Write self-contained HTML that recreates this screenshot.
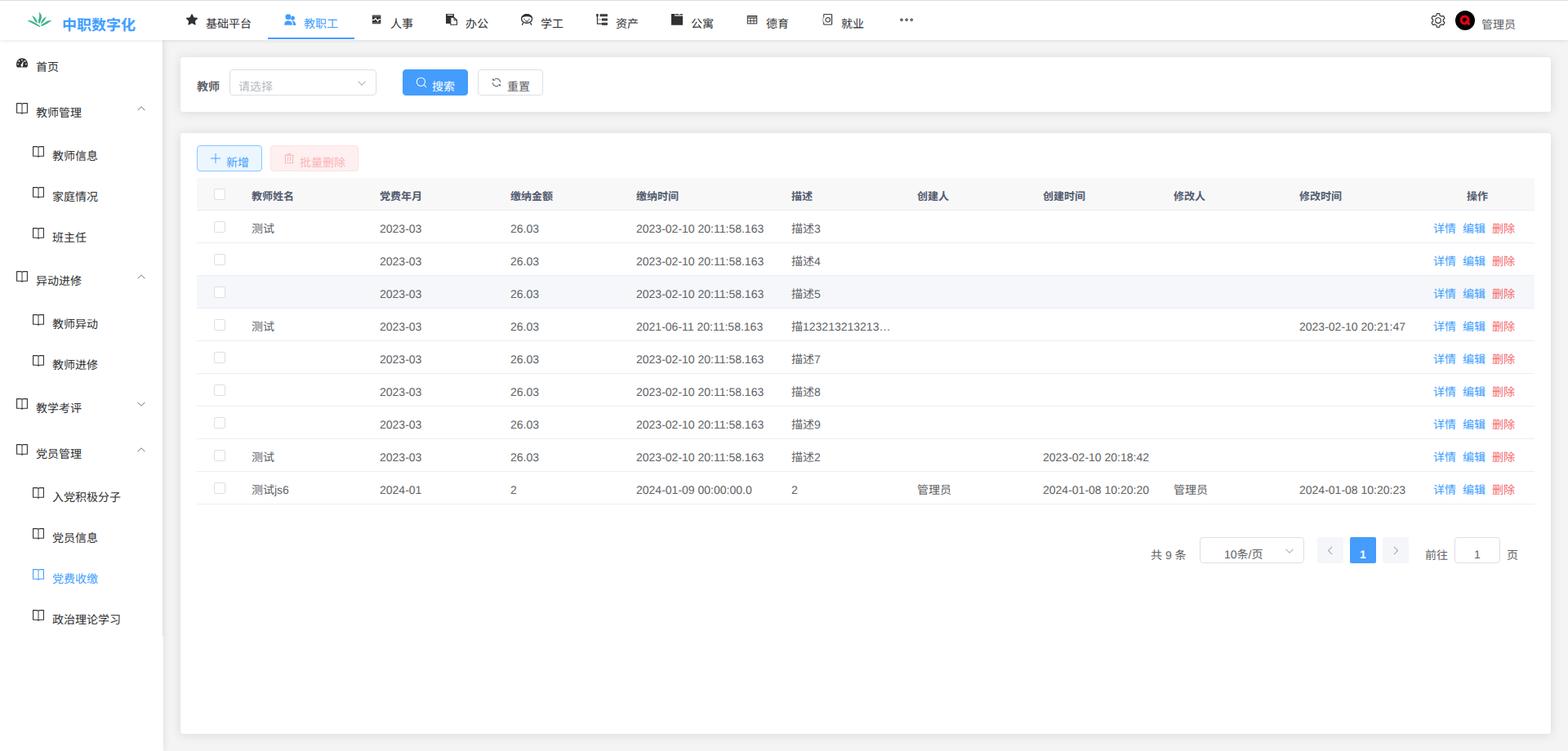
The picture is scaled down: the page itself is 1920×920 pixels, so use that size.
<!DOCTYPE html>
<html lang="zh-CN">
<head>
<meta charset="utf-8">
<title>党费收缴</title>
<style>
*{box-sizing:border-box;margin:0;padding:0}
html,body{width:1920px;height:920px;overflow:hidden}
body{font-family:"Liberation Sans","Noto Sans CJK SC",sans-serif;font-size:14px;color:#606266;background:#f4f4f5;position:relative;text-rendering:geometricPrecision}
svg{display:block}
.abs{position:absolute}

/* ---------- header ---------- */
#topline{position:absolute;left:0;top:0;width:1920px;height:1px;background:#dcdedc;z-index:30}
#header{position:absolute;left:0;top:0;width:1920px;height:49px;background:#fff;box-shadow:0 1px 4px rgba(0,21,41,.10);z-index:20}
#logo-ic{position:absolute;left:33px;top:14px;width:31px;height:20px}
#logo-tx{position:absolute;left:76px;top:12px;height:26px;line-height:26px;font-size:18px;font-weight:bold;color:#409eff;white-space:nowrap}
.nav{position:absolute;top:0;height:48px;line-height:48px;font-size:14px;color:#303133;white-space:nowrap}
.nav .ic{position:absolute;left:20px;top:17px;width:14px;height:14px}
.nav .tx{position:absolute;left:44px;top:0}
.nav.act{color:#409eff}
.nav.act:after{content:"";position:absolute;left:0;right:0;top:46px;height:2px;background:#409eff}
#gear{position:absolute;left:1752px;top:16px;width:18px;height:18px}
#avatar{position:absolute;left:1782px;top:13px;width:24px;height:24px;border-radius:50%;background:#000;overflow:hidden}
#uname{position:absolute;left:1814px;top:13px;height:24px;line-height:24px;font-size:14px;color:#606266;white-space:nowrap}

/* ---------- sidebar ---------- */
#side{position:absolute;left:0;top:49px;width:200px;height:871px;background:#fff;z-index:10;box-shadow:1px 0 8px rgba(0,10,20,.085)}
#side .bd{position:absolute;left:199px;top:0;width:1px;height:730px;background:#dfe1e9}
.mi{position:absolute;left:0;width:199px;font-size:14px;color:#303133;white-space:nowrap}
.mi.l1{height:56px;line-height:56px}
.mi.l2{height:50px;line-height:50px}
.mi .ic{position:absolute;width:14px;height:14px}
.mi.l1 .ic{left:20px;top:21px}
.mi.l2 .ic{left:40px;top:18px}
.mi.l1 .tx{position:absolute;left:44px;top:0}
.mi.l2 .tx{position:absolute;left:64px;top:0}
.mi .ar{position:absolute;left:168px;top:25.2px;width:10px;height:6px}
.mi.on{color:#409eff}

/* ---------- cards ---------- */
.card{position:absolute;left:221px;width:1678px;background:#fff;border-radius:3px;box-shadow:0 0 0 1px rgba(228,231,240,.4),0 1px 14px 0 rgba(0,0,0,.11)}
#c1{top:70px;height:67px}
#c2{top:163px;height:736px}

/* ---------- search form ---------- */
#lbl{position:absolute;left:20px;top:15px;height:32px;line-height:32px;font-size:14px;font-weight:bold;color:#606266}
.sel{position:absolute;height:32px;border:1px solid #dcdfe6;border-radius:4px;background:#fff;font-size:14px;line-height:30px;white-space:nowrap}
#tsel{left:60px;top:15px;width:180px;padding-left:10px;color:#b6bac2}
.sel .dn{position:absolute;width:10px;height:6px;top:12.5px}
.btn{position:absolute;height:32px;border-radius:4px;font-size:14px;line-height:30px;border:1px solid #dcdfe6;background:#fff;color:#606266;white-space:nowrap}
.btn .bi{position:absolute;top:8px;width:14px;height:14px}
.btn .bt{position:absolute;top:0}
#bsearch{left:272px;top:15px;width:80px;background:#449cfc;border-color:#449cfc;color:#fff}
#breset{left:364px;top:15px;width:80px}
#badd{left:20px;top:15px;width:80px;background:#ebf6ff;border-color:#8cc5ff;color:#409eff}
#bdel{left:110px;top:15px;width:108px;background:#fef0f0;border-color:#fde2e2;color:#fab6b6}

/* ---------- table ---------- */
#tb{position:absolute;left:20px;top:55px;width:1638px;border-collapse:separate;border-spacing:0;table-layout:fixed;font-size:14px;color:#606266}
#tb th,#tb td{height:40px;padding:0 10px;text-align:left;vertical-align:middle;border-bottom:1px solid #ebeef5;white-space:nowrap;overflow:hidden;text-overflow:ellipsis;line-height:23px}
#tb th{background:#f8f8f9;color:#515a6e;font-size:13px;font-weight:bold}
#tb tr.hv td{background:#f5f7fa}
#tb .c{text-align:center}
.cb{display:inline-block;width:14px;height:14px;border:1px solid #dcdfe6;border-radius:2px;background:#fff;vertical-align:middle;position:relative;top:-1px;left:-1px}
#tb td .cb{top:0}
#tb td.op{padding:0 10px;text-align:center;font-size:14px}
#tb td.op a{color:#409eff;margin-right:8px;text-decoration:none}
#tb td.op a.d{color:#f56c6c}

/* ---------- pagination ---------- */
#pg{position:absolute;left:0;top:495px;width:1678px;height:32px;font-size:14px;color:#606266;line-height:32px}
#pg .t{position:absolute;top:1px;white-space:nowrap}
#pg .pb{position:absolute;top:0;width:32px;height:32px;border-radius:2px;background:#f5f6fa}
#pg .pb svg{position:absolute;left:12px;top:10.5px;width:8px;height:11px}
#pg .pn{position:absolute;top:0;width:32px;height:32px;border-radius:2px;background:#449cfc;color:#fff;font-weight:bold;text-align:center;font-size:14px}

/* ---------- text spans (real text) ---------- */
.z{display:inline-block;position:relative;overflow:visible;white-space:pre;height:1.4em;line-height:1.4em;vertical-align:-.35em;text-align:left}
</style>
</head>
<body>
<div id="topline"></div>

<!-- HEADER -->
<div id="header">
  <svg id="logo-ic" viewBox="0 0 31 20"><g fill="#3fb38b"><path d="M14.4 1.1C16.6 1.8 18.2 4.4 18 6.9C17.8 10 16.2 12 15.7 14.7L14.4 14.6C13.5 12 14.2 9.6 15 7C15.5 5 15.3 3 14.4 1.1Z"></path><path d="M6.2 5C9.6 6.6 12.4 10 13 14.4C10.4 13.6 8.4 10 6.2 5Z"></path><path d="M23.9 6.2C20.4 8 17.7 11 16.7 15.2C19.9 14.1 21.9 10.5 23.9 6.2Z"></path><path d="M.8 11.4C2.5 10.5 4.5 10.9 6 11.7C10 13.7 14 15.9 16.3 18.3C16 19 15.3 19.1 14.7 18.7C11 16.6 5 13.6 .8 11.4Z"></path><path d="M30.1 11.3C27.5 10.7 25 11.7 22.9 12.9C20 14.6 18 15.9 16.8 17.1C16.9 17.9 17.6 18.1 18.3 17.9C22 16.9 26.5 14 30.1 11.3Z"></path></g></svg>
  <div id="logo-tx"><span class="z" style="width: 90px;">中职数字化</span></div>

  <div class="nav" style="left:208px;width:120px">
    <svg class="ic" viewBox="0 0 14 14"><path d="M7.00 0.80 L8.94 4.83 L13.37 5.43 L10.14 8.52 L10.94 12.92 L7.00 10.80 L3.06 12.92 L3.86 8.52 L0.63 5.43 L5.06 4.83Z" fill="#303133" stroke="#303133" stroke-width="1.3" stroke-linejoin="round"></path></svg>
    <span class="tx"><span class="z" style="width: 56px;">基础平台</span></span>
  </div>
  <div class="nav act" style="left:328px;width:106px">
    <svg class="ic" viewBox="0 0 14 14"><g fill="#409eff"><circle cx="10.3" cy="5.1" r="2.6"></circle><path d="M9.2 8.6C12.2 8.2 14.2 10.2 14.2 14H11.2C11.2 11.6 10.5 9.9 9.2 8.6Z"></path><circle cx="4.9" cy="3.7" r="3.6" stroke="#fff" stroke-width=".8"></circle><path d="M-.2 14C-.2 10.2 1.9 8.1 4.9 8.1S10.4 10.2 10.4 14Z" stroke="#fff" stroke-width=".6"></path><circle cx="4.9" cy="3.7" r="3.3"></circle></g></svg>
    <span class="tx"><span class="z" style="width: 42px;">教职工</span></span>
  </div>
  <div class="nav" style="left:434px;width:92px">
    <svg class="ic" viewBox="0 0 14 14"><rect x="1.8" y="1.6" width="10.5" height="10.6" rx=".7" fill="#303133"></rect><path d="M2 7.3H4.2L6 5.4L8.5 8.9L10.1 6.7H12.1" fill="none" stroke="#fff" stroke-width="1.3"></path><path d="M2.3 2.9H11.8M2.3 10.9H11.8" stroke="#fff" stroke-opacity=".5" stroke-width=".8"></path></svg>
    <span class="tx"><span class="z" style="width: 28px;">人事</span></span>
  </div>
  <div class="nav" style="left:526px;width:92px">
    <svg class="ic" viewBox="0 0 14 14"><rect x="0" y="0" width="9.9" height="11.9" fill="#303133"></rect><path d="M1.8 1.5H8.4" stroke="#fff" stroke-width="1.2"></path><path d="M5.8 4.3H10L13.5 7.8V13.3H5.8Z" fill="#fff" stroke="#303133" stroke-width="1.1"></path><path d="M10 4.5V7.8H13.3" fill="none" stroke="#303133" stroke-width="1"></path></svg>
    <span class="tx"><span class="z" style="width: 28px;">办公</span></span>
  </div>
  <div class="nav" style="left:618px;width:92px">
    <svg class="ic" viewBox="0 0 14 14"><ellipse cx="7.1" cy="5.95" rx="6.5" ry="5.3" fill="#fff" stroke="#303133" stroke-width="1.3"></ellipse><path d="M.9 5C1.4 1.9 3.9 0 7.1 0S12.8 1.9 13.3 5C11 2.7 3.2 2.7 .9 5Z" fill="#303133"></path><circle cx="4.2" cy="6.5" r=".75" fill="#303133"></circle><circle cx="9.9" cy="6.5" r=".75" fill="#303133"></circle><path d="M4.8 7.9C5.8 9.7 8.4 9.7 9.4 7.9" fill="#303133" fill-opacity=".35" stroke="#303133" stroke-width="1"></path><path d="M2.6 10.7L1.4 13.8M11.6 10.7L12.7 13.8" stroke="#303133" stroke-width="1.3"></path></svg>
    <span class="tx"><span class="z" style="width: 28px;">学工</span></span>
  </div>
  <div class="nav" style="left:710px;width:92px">
    <svg class="ic" viewBox="0 0 14 14"><g fill="#303133"><rect x=".2" y=".1" width="2.4" height="3.1" rx=".5"></rect><rect x="4.6" y=".2" width="9.3" height="3"></rect><rect x="7" y="5.5" width="6.9" height="3"></rect><rect x="7" y="10.7" width="6.9" height="3.1"></rect></g><path d="M1.4 3V12.1H7" fill="none" stroke="#303133" stroke-width="1.1"></path><path d="M2 7H7" stroke="#303133" stroke-opacity=".4" stroke-width="1.3"></path><path d="M5.2 1.4H13.6M7.5 6.7H13.6M7.5 11.9H13.6" stroke="#fff" stroke-opacity=".3" stroke-width=".5"></path></svg>
    <span class="tx"><span class="z" style="width: 28px;">资产</span></span>
  </div>
  <div class="nav" style="left:802px;width:92px">
    <svg class="ic" viewBox="0 0 14 14"><path d="M0 .1H4.2V2.8H14V13.8H0Z" fill="#303133"></path><rect x="4.3" y="1.1" width="9.7" height="1.7" fill="#a6a6a6"></rect><path d="M4.5 .5H9.2M10.6 .5H14" stroke="#303133" stroke-width=".9"></path></svg>
    <span class="tx"><span class="z" style="width: 28px;">公寓</span></span>
  </div>
  <div class="nav" style="left:894px;width:92px">
    <svg class="ic" viewBox="0 0 14 14"><rect x="1.3" y="2.5" width="11.4" height="9.4" fill="#fff" stroke="#303133" stroke-width="1"></rect><rect x="1.8" y="3" width="10.4" height="1.7" fill="#999"></rect><path d="M1.3 5.2H12.7M1.3 8.6H12.7M5 5.2V11.9M9 5.2V11.9" stroke="#303133" stroke-width=".9"></path></svg>
    <span class="tx"><span class="z" style="width: 28px;">德育</span></span>
  </div>
  <div class="nav" style="left:986px;width:92px">
    <svg class="ic" viewBox="0 0 14 14"><path d="M2.7 4.3V.6H12.4V13.1H2.7V9.9" fill="none" stroke="#303133" stroke-width="1"></path><path d="M13 .4V13.4" stroke="#303133" stroke-opacity=".45" stroke-width=".7"></path><path d="M.5 5.2H3M.5 7.2H3M.5 9.2H3" stroke="#303133" stroke-opacity=".55" stroke-width=".8"></path><circle cx="7.7" cy="7.2" r="2.75" fill="#fff" stroke="#303133" stroke-width="1.05"></circle><path d="M7.4 6.2V8L8.8 7.1Z" fill="#303133" fill-opacity=".45"></path></svg>
    <span class="tx"><span class="z" style="width: 28px;">就业</span></span>
  </div>
  <div class="nav" style="left:1078px;width:64px">
    <svg class="ic" style="left:23px;top:21px;width:18px;height:6px" viewBox="0 0 18 6"><g fill="#fff" stroke="#303133" stroke-width="1.1"><circle cx="3" cy="3.2" r="1.2"></circle><circle cx="9.1" cy="3.2" r="1.2"></circle><circle cx="15.2" cy="3.2" r="1.2"></circle></g></svg>
  </div>


  <svg id="gear" viewBox="0 0 18 18"><path d="M7.2 0.9 L9.0 0.5 L10.8 0.9 L11.0 2.9 L12.1 3.5 L13.3 4.2 L15.1 3.4 L16.3 4.8 L16.9 6.5 L15.3 7.7 L15.3 9.0 L15.3 10.3 L16.9 11.5 L16.3 13.2 L15.1 14.6 L13.3 13.8 L12.2 14.5 L11.0 15.1 L10.8 17.1 L9.0 17.5 L7.2 17.1 L7.0 15.1 L5.9 14.5 L4.7 13.8 L2.9 14.6 L1.7 13.2 L1.1 11.5 L2.7 10.3 L2.7 9.0 L2.7 7.7 L1.1 6.5 L1.7 4.8 L2.9 3.4 L4.7 4.2 L5.8 3.5 L7.0 2.9Z" fill="none" stroke="#303133" stroke-width="1.15" stroke-linejoin="round"></path><circle cx="9" cy="9" r="3.3" fill="none" stroke="#303133" stroke-width="1.15"></circle></svg>
  <div id="avatar"><svg width="24" height="24" viewBox="0 0 24 24"><circle cx="11.6" cy="11.6" r="4.4" fill="none" stroke="#e60012" stroke-width="3.2"></circle><path d="M12.6 12.6L17.6 17.2" stroke="#e60012" stroke-width="3"></path></svg></div>
  <div id="uname"><span class="z" style="width: 42px;">管理员</span></div>

</div>

<!-- SIDEBAR -->
<div id="side">
  <div class="bd"></div>
  <div class="mi l1" style="top:0px"><svg class="ic" viewBox="0 0 14 14"><path d="M0 9C0 4.6 3.1 1.3 7 1.3S14 4.6 14 9C14 10.4 13.7 11.6 13.1 12.6H.9C.3 11.6 0 10.4 0 9Z" fill="#303133"></path><g fill="#fff"><ellipse cx="6.85" cy="3.5" rx="1.05" ry=".75"></ellipse><circle cx="3.45" cy="5" r=".95"></circle><circle cx="10.5" cy="5" r=".95"></circle><ellipse cx="2.05" cy="8.55" rx="1.05" ry=".75"></ellipse><ellipse cx="11.9" cy="8.55" rx="1.05" ry=".75"></ellipse><circle cx="6.85" cy="10" r="1.45"></circle><path d="M6 9.6L8.1 5.1L8.9 5.4L7.7 10.3Z"></path><rect x="6.3" y="11" width="1.1" height="1.6" fill-opacity=".6"></rect></g></svg><span class="tx"><span class="z" style="width: 28px;">首页</span></span></div>
  <div class="mi l1" style="top:56px"><svg class="ic" viewBox="0 0 14 14"><path d="M7 1.9V13" stroke="#303133" stroke-opacity=".55" stroke-width="1.7"></path><path d="M.6 .6H5.5C6.3 .6 6.8 1 7 1.7C7.2 1 7.7 .6 8.5 .6H13.4V12.3H8.6C7.8 12.3 7.3 12.7 7 13.4C6.7 12.7 6.2 12.3 5.4 12.3H.6Z" fill="none" stroke="#303133" stroke-width="1.1" stroke-linejoin="round"></path></svg><span class="tx"><span class="z" style="width: 56px;">教师管理</span></span><svg class="ar" viewBox="0 0 10 6"><path d="M.6 5.2L5 .9L9.4 5.2" fill="none" stroke="#909399" stroke-width="1.05"></path></svg></div>
  <div class="mi l2" style="top:112px"><svg class="ic" viewBox="0 0 14 14"><path d="M7 1.9V13" stroke="#303133" stroke-opacity=".55" stroke-width="1.7"></path><path d="M.6 .6H5.5C6.3 .6 6.8 1 7 1.7C7.2 1 7.7 .6 8.5 .6H13.4V12.3H8.6C7.8 12.3 7.3 12.7 7 13.4C6.7 12.7 6.2 12.3 5.4 12.3H.6Z" fill="none" stroke="#303133" stroke-width="1.1" stroke-linejoin="round"></path></svg><span class="tx"><span class="z" style="width: 56px;">教师信息</span></span></div>
  <div class="mi l2" style="top:162px"><svg class="ic" viewBox="0 0 14 14"><path d="M7 1.9V13" stroke="#303133" stroke-opacity=".55" stroke-width="1.7"></path><path d="M.6 .6H5.5C6.3 .6 6.8 1 7 1.7C7.2 1 7.7 .6 8.5 .6H13.4V12.3H8.6C7.8 12.3 7.3 12.7 7 13.4C6.7 12.7 6.2 12.3 5.4 12.3H.6Z" fill="none" stroke="#303133" stroke-width="1.1" stroke-linejoin="round"></path></svg><span class="tx"><span class="z" style="width: 56px;">家庭情况</span></span></div>
  <div class="mi l2" style="top:212px"><svg class="ic" viewBox="0 0 14 14"><path d="M7 1.9V13" stroke="#303133" stroke-opacity=".55" stroke-width="1.7"></path><path d="M.6 .6H5.5C6.3 .6 6.8 1 7 1.7C7.2 1 7.7 .6 8.5 .6H13.4V12.3H8.6C7.8 12.3 7.3 12.7 7 13.4C6.7 12.7 6.2 12.3 5.4 12.3H.6Z" fill="none" stroke="#303133" stroke-width="1.1" stroke-linejoin="round"></path></svg><span class="tx"><span class="z" style="width: 42px;">班主任</span></span></div>
  <div class="mi l1" style="top:262px"><svg class="ic" viewBox="0 0 14 14"><path d="M7 1.9V13" stroke="#303133" stroke-opacity=".55" stroke-width="1.7"></path><path d="M.6 .6H5.5C6.3 .6 6.8 1 7 1.7C7.2 1 7.7 .6 8.5 .6H13.4V12.3H8.6C7.8 12.3 7.3 12.7 7 13.4C6.7 12.7 6.2 12.3 5.4 12.3H.6Z" fill="none" stroke="#303133" stroke-width="1.1" stroke-linejoin="round"></path></svg><span class="tx"><span class="z" style="width: 56px;">异动进修</span></span><svg class="ar" viewBox="0 0 10 6"><path d="M.6 5.2L5 .9L9.4 5.2" fill="none" stroke="#909399" stroke-width="1.05"></path></svg></div>
  <div class="mi l2" style="top:318px"><svg class="ic" viewBox="0 0 14 14"><path d="M7 1.9V13" stroke="#303133" stroke-opacity=".55" stroke-width="1.7"></path><path d="M.6 .6H5.5C6.3 .6 6.8 1 7 1.7C7.2 1 7.7 .6 8.5 .6H13.4V12.3H8.6C7.8 12.3 7.3 12.7 7 13.4C6.7 12.7 6.2 12.3 5.4 12.3H.6Z" fill="none" stroke="#303133" stroke-width="1.1" stroke-linejoin="round"></path></svg><span class="tx"><span class="z" style="width: 56px;">教师异动</span></span></div>
  <div class="mi l2" style="top:368px"><svg class="ic" viewBox="0 0 14 14"><path d="M7 1.9V13" stroke="#303133" stroke-opacity=".55" stroke-width="1.7"></path><path d="M.6 .6H5.5C6.3 .6 6.8 1 7 1.7C7.2 1 7.7 .6 8.5 .6H13.4V12.3H8.6C7.8 12.3 7.3 12.7 7 13.4C6.7 12.7 6.2 12.3 5.4 12.3H.6Z" fill="none" stroke="#303133" stroke-width="1.1" stroke-linejoin="round"></path></svg><span class="tx"><span class="z" style="width: 56px;">教师进修</span></span></div>
  <div class="mi l1" style="top:418px"><svg class="ic" viewBox="0 0 14 14"><path d="M7 1.9V13" stroke="#303133" stroke-opacity=".55" stroke-width="1.7"></path><path d="M.6 .6H5.5C6.3 .6 6.8 1 7 1.7C7.2 1 7.7 .6 8.5 .6H13.4V12.3H8.6C7.8 12.3 7.3 12.7 7 13.4C6.7 12.7 6.2 12.3 5.4 12.3H.6Z" fill="none" stroke="#303133" stroke-width="1.1" stroke-linejoin="round"></path></svg><span class="tx"><span class="z" style="width: 56px;">教学考评</span></span><svg class="ar" viewBox="0 0 10 6"><path d="M.6 .8L5 5.1L9.4 .8" fill="none" stroke="#909399" stroke-width="1.05"></path></svg></div>
  <div class="mi l1" style="top:474px"><svg class="ic" viewBox="0 0 14 14"><path d="M7 1.9V13" stroke="#303133" stroke-opacity=".55" stroke-width="1.7"></path><path d="M.6 .6H5.5C6.3 .6 6.8 1 7 1.7C7.2 1 7.7 .6 8.5 .6H13.4V12.3H8.6C7.8 12.3 7.3 12.7 7 13.4C6.7 12.7 6.2 12.3 5.4 12.3H.6Z" fill="none" stroke="#303133" stroke-width="1.1" stroke-linejoin="round"></path></svg><span class="tx"><span class="z" style="width: 56px;">党员管理</span></span><svg class="ar" viewBox="0 0 10 6"><path d="M.6 5.2L5 .9L9.4 5.2" fill="none" stroke="#909399" stroke-width="1.05"></path></svg></div>
  <div class="mi l2" style="top:530px"><svg class="ic" viewBox="0 0 14 14"><path d="M7 1.9V13" stroke="#303133" stroke-opacity=".55" stroke-width="1.7"></path><path d="M.6 .6H5.5C6.3 .6 6.8 1 7 1.7C7.2 1 7.7 .6 8.5 .6H13.4V12.3H8.6C7.8 12.3 7.3 12.7 7 13.4C6.7 12.7 6.2 12.3 5.4 12.3H.6Z" fill="none" stroke="#303133" stroke-width="1.1" stroke-linejoin="round"></path></svg><span class="tx"><span class="z" style="width: 84px;">入党积极分子</span></span></div>
  <div class="mi l2" style="top:580px"><svg class="ic" viewBox="0 0 14 14"><path d="M7 1.9V13" stroke="#303133" stroke-opacity=".55" stroke-width="1.7"></path><path d="M.6 .6H5.5C6.3 .6 6.8 1 7 1.7C7.2 1 7.7 .6 8.5 .6H13.4V12.3H8.6C7.8 12.3 7.3 12.7 7 13.4C6.7 12.7 6.2 12.3 5.4 12.3H.6Z" fill="none" stroke="#303133" stroke-width="1.1" stroke-linejoin="round"></path></svg><span class="tx"><span class="z" style="width: 56px;">党员信息</span></span></div>
  <div class="mi l2 on" style="top:630px"><svg class="ic" viewBox="0 0 14 14"><path d="M7 1.9V13" stroke="#409eff" stroke-opacity=".55" stroke-width="1.7"></path><path d="M.6 .6H5.5C6.3 .6 6.8 1 7 1.7C7.2 1 7.7 .6 8.5 .6H13.4V12.3H8.6C7.8 12.3 7.3 12.7 7 13.4C6.7 12.7 6.2 12.3 5.4 12.3H.6Z" fill="none" stroke="#409eff" stroke-width="1.1" stroke-linejoin="round"></path></svg><span class="tx"><span class="z" style="width: 56px;">党费收缴</span></span></div>
  <div class="mi l2" style="top:680px"><svg class="ic" viewBox="0 0 14 14"><path d="M7 1.9V13" stroke="#303133" stroke-opacity=".55" stroke-width="1.7"></path><path d="M.6 .6H5.5C6.3 .6 6.8 1 7 1.7C7.2 1 7.7 .6 8.5 .6H13.4V12.3H8.6C7.8 12.3 7.3 12.7 7 13.4C6.7 12.7 6.2 12.3 5.4 12.3H.6Z" fill="none" stroke="#303133" stroke-width="1.1" stroke-linejoin="round"></path></svg><span class="tx"><span class="z" style="width: 84px;">政治理论学习</span></span></div>
</div>

<!-- SEARCH CARD -->
<div class="card" id="c1">

  <div id="lbl"><span class="z" style="width: 28px;">教师</span></div>
  <div class="sel" id="tsel"><span class="z" style="width: 42px;">请选择</span><svg class="dn" style="left:156px" viewBox="0 0 10 6"><path d="M.5 .6L5 5.1L9.5 .6" fill="none" stroke="#b2b5bc" stroke-width="1.1"></path></svg></div>
  <div class="btn" id="bsearch"><svg class="bi" style="left:15px" viewBox="0 0 14 14"><circle cx="6.4" cy="6.3" r="5.1" fill="none" stroke="#fff" stroke-width="1.05"></circle><path d="M10.1 10L13 12.9" stroke="#fff" stroke-width="1.05"></path></svg><span class="bt" style="left:35px"><span class="z" style="width: 28px;">搜索</span></span></div>
  <div class="btn" id="breset"><svg class="bi" style="left:15px" viewBox="0 0 14 14"><g fill="none" stroke="#606266" stroke-width="1.05"><path d="M5 2.75A4.7 4.7 0 0 1 11.7 6.7"></path><path d="M2.3 7.2A4.7 4.7 0 0 0 9 11.25"></path></g><path d="M2.1 1.9V4.7L5.9 4.5ZM8.1 9.4L11.9 9.2V12Z" fill="#606266"></path></svg><span class="bt" style="left:35px"><span class="z" style="width: 28px;">重置</span></span></div>

</div>

<!-- TABLE CARD -->
<div class="card" id="c2">

  <div class="btn" id="badd"><svg class="bi" style="left:15px" viewBox="0 0 14 14"><path d="M6.5 1H7.5V6.5H13V7.5H7.5V13H6.5V7.5H1V6.5H6.5Z" fill="#409eff" fill-opacity=".95"></path></svg><span class="bt" style="left:35px"><span class="z" style="width: 28px;">新增</span></span></div>
  <div class="btn" id="bdel"><svg class="bi" style="left:15px" viewBox="0 0 14 14"><g fill="none" stroke="#fab6b6" stroke-width="1.05"><path d="M1.2 3.3H12.8"></path><path d="M5.4 3.1V1.4H8.6V3.1"></path><path d="M2.4 3.5V12.7H11.6V3.5"></path><path d="M5.5 5.3V10.4M8.5 5.3V10.4"></path></g></svg><span class="bt" style="left:35px"><span class="z" style="width: 56px;">批量删除</span></span></div>
  <table id="tb">
    <colgroup><col style="width:57px"><col style="width:157px"><col style="width:160px"><col style="width:154px"><col style="width:190px"><col style="width:154px"><col style="width:154px"><col style="width:160px"><col style="width:154px"><col style="width:158px"><col style="width:140px"></colgroup>
    <thead><tr><th class="c"><span class="cb"></span></th><th><span class="z" style="width: 52px;">教师姓名</span></th><th><span class="z" style="width: 52px;">党费年月</span></th><th><span class="z" style="width: 52px;">缴纳金额</span></th><th><span class="z" style="width: 52px;">缴纳时间</span></th><th><span class="z" style="width: 26px;">描述</span></th><th><span class="z" style="width: 39px;">创建人</span></th><th><span class="z" style="width: 52px;">创建时间</span></th><th><span class="z" style="width: 39px;">修改人</span></th><th><span class="z" style="width: 52px;">修改时间</span></th><th class="c"><span class="z" style="width: 26px;">操作</span></th></tr></thead>
    <tbody>
      <tr><td class="c"><span class="cb"></span></td><td><span class="z" style="width: 28px;">测试</span></td><td><span class="z" style="width: 51.38px;">2023-03</span></td><td><span class="z" style="width: 35.03px;">26.03</span></td><td><span class="z" style="width: 157.25px;">2023-02-10 20:11:58.163</span></td><td><span class="z" style="width: 35.79px;">描述3</span></td><td></td><td></td><td></td><td></td><td class="op"><a><span class="z" style="width: 28px;">详情</span></a><a><span class="z" style="width: 28px;">编辑</span></a><a class="d"><span class="z" style="width: 28px;">删除</span></a></td></tr>
      <tr><td class="c"><span class="cb"></span></td><td></td><td><span class="z" style="width: 51.38px;">2023-03</span></td><td><span class="z" style="width: 35.03px;">26.03</span></td><td><span class="z" style="width: 157.25px;">2023-02-10 20:11:58.163</span></td><td><span class="z" style="width: 35.79px;">描述4</span></td><td></td><td></td><td></td><td></td><td class="op"><a><span class="z" style="width: 28px;">详情</span></a><a><span class="z" style="width: 28px;">编辑</span></a><a class="d"><span class="z" style="width: 28px;">删除</span></a></td></tr>
      <tr class="hv"><td class="c"><span class="cb"></span></td><td></td><td><span class="z" style="width: 51.38px;">2023-03</span></td><td><span class="z" style="width: 35.03px;">26.03</span></td><td><span class="z" style="width: 157.25px;">2023-02-10 20:11:58.163</span></td><td><span class="z" style="width: 35.79px;">描述5</span></td><td></td><td></td><td></td><td></td><td class="op"><a><span class="z" style="width: 28px;">详情</span></a><a><span class="z" style="width: 28px;">编辑</span></a><a class="d"><span class="z" style="width: 28px;">删除</span></a></td></tr>
      <tr><td class="c"><span class="cb"></span></td><td><span class="z" style="width: 28px;">测试</span></td><td><span class="z" style="width: 51.38px;">2023-03</span></td><td><span class="z" style="width: 35.03px;">26.03</span></td><td><span class="z" style="width: 157.25px;">2021-06-11 20:11:58.163</span></td><td><span class="z" style="width: 121.43px;">描123213213213…</span></td><td></td><td></td><td></td><td><span class="z" style="width: 130px;">2023-02-10 20:21:47</span></td><td class="op"><a><span class="z" style="width: 28px;">详情</span></a><a><span class="z" style="width: 28px;">编辑</span></a><a class="d"><span class="z" style="width: 28px;">删除</span></a></td></tr>
      <tr><td class="c"><span class="cb"></span></td><td></td><td><span class="z" style="width: 51.38px;">2023-03</span></td><td><span class="z" style="width: 35.03px;">26.03</span></td><td><span class="z" style="width: 157.25px;">2023-02-10 20:11:58.163</span></td><td><span class="z" style="width: 35.79px;">描述7</span></td><td></td><td></td><td></td><td></td><td class="op"><a><span class="z" style="width: 28px;">详情</span></a><a><span class="z" style="width: 28px;">编辑</span></a><a class="d"><span class="z" style="width: 28px;">删除</span></a></td></tr>
      <tr><td class="c"><span class="cb"></span></td><td></td><td><span class="z" style="width: 51.38px;">2023-03</span></td><td><span class="z" style="width: 35.03px;">26.03</span></td><td><span class="z" style="width: 157.25px;">2023-02-10 20:11:58.163</span></td><td><span class="z" style="width: 35.79px;">描述8</span></td><td></td><td></td><td></td><td></td><td class="op"><a><span class="z" style="width: 28px;">详情</span></a><a><span class="z" style="width: 28px;">编辑</span></a><a class="d"><span class="z" style="width: 28px;">删除</span></a></td></tr>
      <tr><td class="c"><span class="cb"></span></td><td></td><td><span class="z" style="width: 51.38px;">2023-03</span></td><td><span class="z" style="width: 35.03px;">26.03</span></td><td><span class="z" style="width: 157.25px;">2023-02-10 20:11:58.163</span></td><td><span class="z" style="width: 35.79px;">描述9</span></td><td></td><td></td><td></td><td></td><td class="op"><a><span class="z" style="width: 28px;">详情</span></a><a><span class="z" style="width: 28px;">编辑</span></a><a class="d"><span class="z" style="width: 28px;">删除</span></a></td></tr>
      <tr><td class="c"><span class="cb"></span></td><td><span class="z" style="width: 28px;">测试</span></td><td><span class="z" style="width: 51.38px;">2023-03</span></td><td><span class="z" style="width: 35.03px;">26.03</span></td><td><span class="z" style="width: 157.25px;">2023-02-10 20:11:58.163</span></td><td><span class="z" style="width: 35.79px;">描述2</span></td><td></td><td><span class="z" style="width: 130px;">2023-02-10 20:18:42</span></td><td></td><td></td><td class="op"><a><span class="z" style="width: 28px;">详情</span></a><a><span class="z" style="width: 28px;">编辑</span></a><a class="d"><span class="z" style="width: 28px;">删除</span></a></td></tr>
      <tr><td class="c"><span class="cb"></span></td><td><span class="z" style="width: 45.9px;">测试js6</span></td><td><span class="z" style="width: 51.38px;">2024-01</span></td><td><span class="z" style="width: 7.79px;">2</span></td><td><span class="z" style="width: 141.67px;">2024-01-09 00:00:00.0</span></td><td><span class="z" style="width: 7.79px;">2</span></td><td><span class="z" style="width: 42px;">管理员</span></td><td><span class="z" style="width: 130px;">2024-01-08 10:20:20</span></td><td><span class="z" style="width: 42px;">管理员</span></td><td><span class="z" style="width: 130px;">2024-01-08 10:20:23</span></td><td class="op"><a><span class="z" style="width: 28px;">详情</span></a><a><span class="z" style="width: 28px;">编辑</span></a><a class="d"><span class="z" style="width: 28px;">删除</span></a></td></tr>
    </tbody>
  </table>
  <div id="pg">
    <span class="t" style="left:1188px"><span class="z" style="width: 43.57px;">共 9 条</span></span>
    <div class="sel" style="left:1248px;top:0;width:128px"><span style="position:absolute;left:29px;top:0;color:#606266"><span class="z" style="width: 47.46px;">10条/页</span></span><svg class="dn" style="left:104px" viewBox="0 0 10 6"><path d="M.5 .6L5 5.1L9.5 .6" fill="none" stroke="#b2b5bc" stroke-width="1.1"></path></svg></div>
    <div class="pb" style="left:1392px"><svg viewBox="0 0 8 11"><path d="M6 .8L1.5 5.5L6 10.2" fill="none" stroke="#a8abb2" stroke-width="1.1"></path></svg></div>
    <div class="pn" style="left:1432px"><span class="z" style="width: 7.79px;">1</span></div>
    <div class="pb" style="left:1472px"><svg viewBox="0 0 8 11"><path d="M2 .8L6.5 5.5L2 10.2" fill="none" stroke="#a8abb2" stroke-width="1.1"></path></svg></div>
    <span class="t" style="left:1524px"><span class="z" style="width: 28px;">前往</span></span>
    <div class="sel" style="left:1560px;top:0;width:56px;text-align:center;color:#606266"><span class="z" style="width: 7.79px;">1</span></div>
    <span class="t" style="left:1624px"><span class="z" style="width: 14px;">页</span></span>
  </div>

</div>
</body>
</html>
